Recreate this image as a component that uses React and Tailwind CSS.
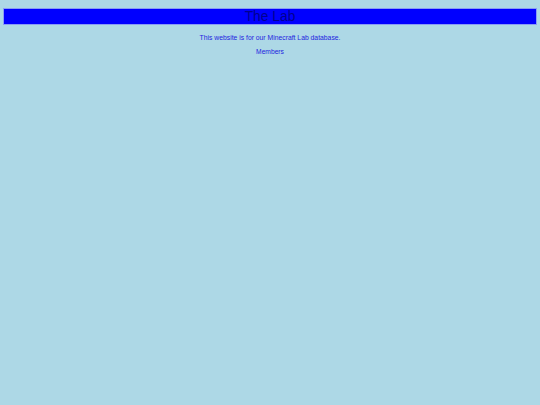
export default function App() {
  return (
    <div className="min-h-screen w-full bg-[#add8e6] px-[3px] pt-[8px] font-['Liberation_Sans',Arial,sans-serif]">
      <div className="flex h-[17px] items-center justify-center border border-[#8a9cf5] bg-[#0000ff]">
        <h1 className="text-[13.8px] leading-none text-[#000090]">The Lab</h1>
      </div>
      <p className="mt-[9px] text-center text-[6.8px] leading-[8px] text-[#1d1de0]">
        This website is for our Minecraft Lab database.
      </p>
      <p className="mt-[6px] text-center text-[6.7px] leading-[8px] text-[#1d1de0]">Members</p>
    </div>
  );
}
